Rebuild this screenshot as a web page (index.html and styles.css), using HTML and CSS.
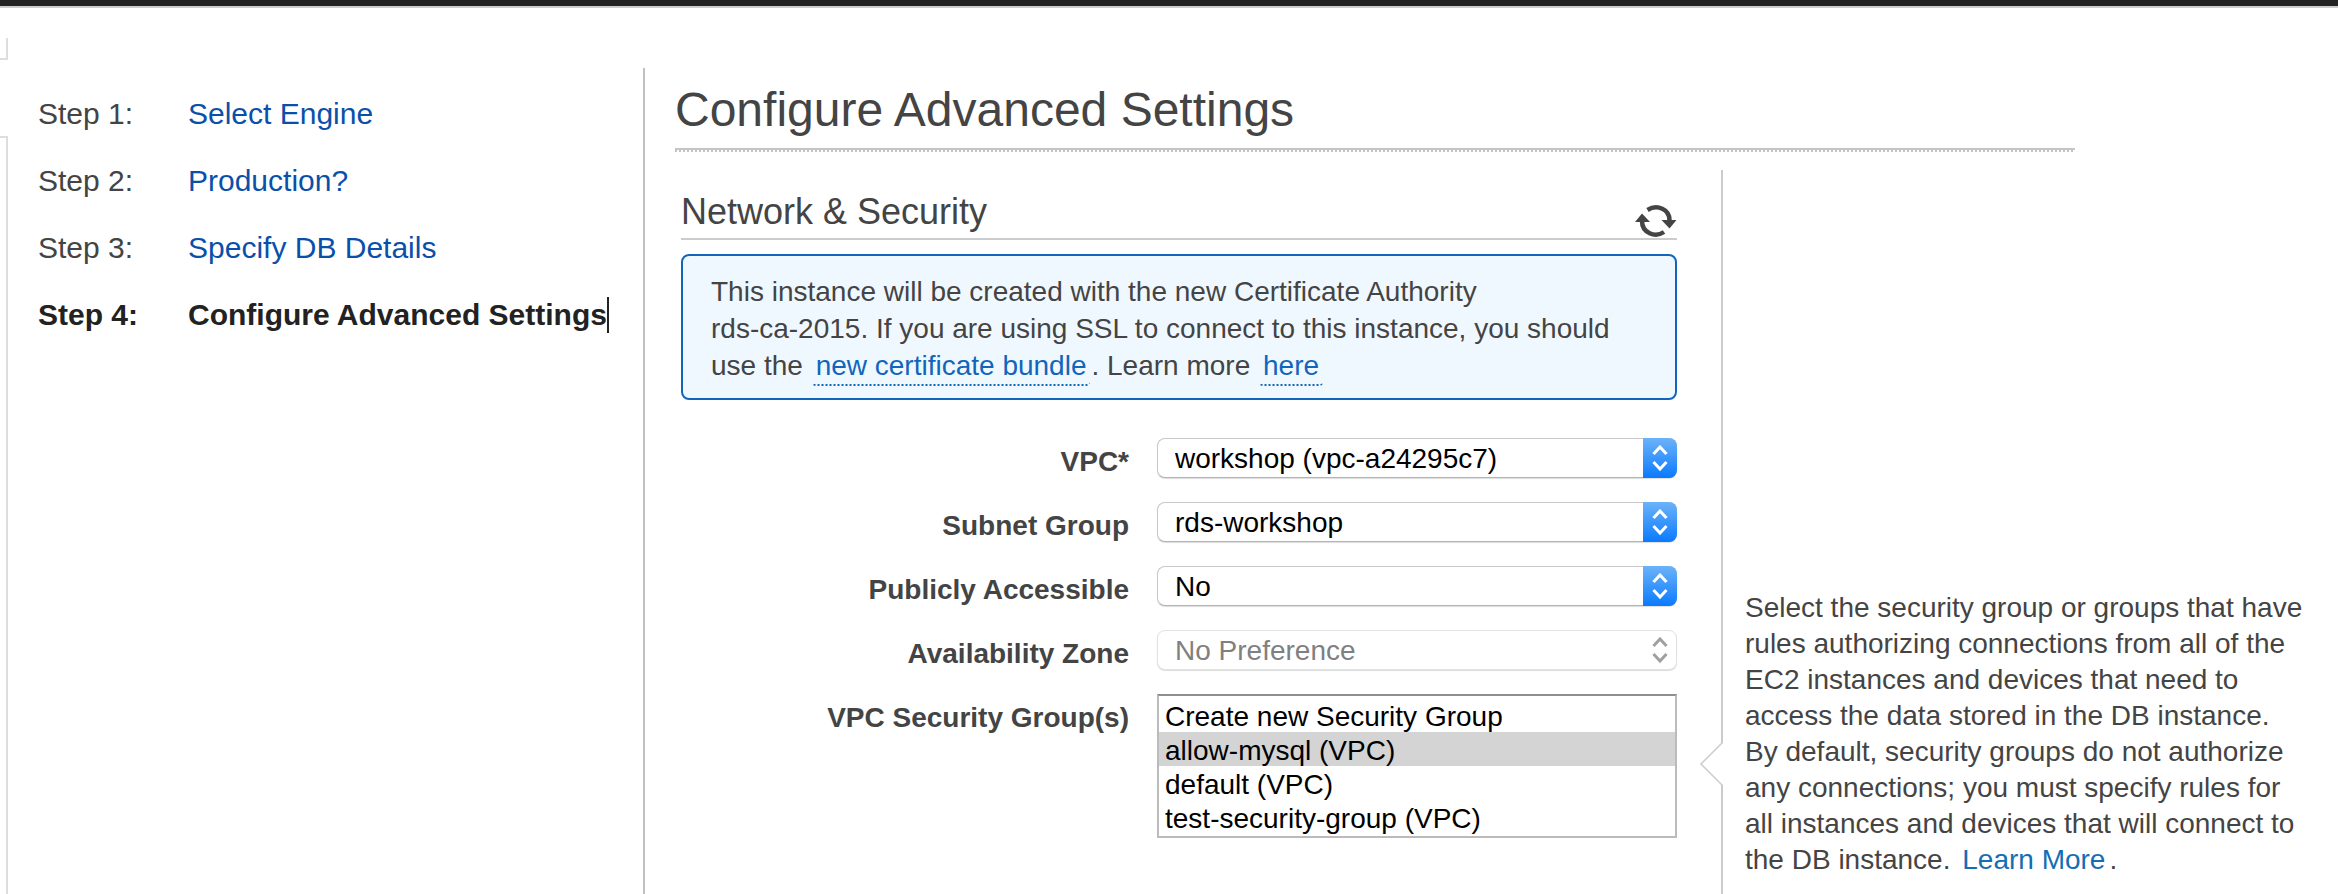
FILE: index.html
```html
<!DOCTYPE html>
<html lang="en">
<head>
<meta charset="utf-8">
<meta name="viewport" content="width=device-width, initial-scale=1">
<title>Configure Advanced Settings</title>
<link rel="stylesheet" href="styles.css">
</head>
<body>
<header class="topbar"></header>
<div class="page">
  <div class="rail" aria-hidden="true">
    <div class="rail-tab"></div>
    <div class="rail-panel"></div>
  </div>

  <nav class="steps" aria-label="Wizard steps">
    <ol class="step-list">
      <li class="step"><span>Step 1:</span><a href="#engine">Select Engine</a></li>
      <li class="step"><span>Step 2:</span><a href="#production">Production?</a></li>
      <li class="step"><span>Step 3:</span><a href="#details">Specify DB Details</a></li>
      <li class="step step-current" aria-current="step"><span>Step 4:</span><span class="step-name">Configure Advanced Settings</span></li>
    </ol>
  </nav>

  <main class="content">
    <h1 class="title">Configure Advanced Settings</h1>
    <div class="title-rule"></div>

    <div class="columns">
      <form class="form">
        <div class="section-head">
          <h2 class="section-title">Network &amp; Security</h2>
          <button class="refresh" type="button" aria-label="Refresh">
            <svg viewBox="0 0 42 34" width="42" height="34" aria-hidden="true">
              <g fill="none" stroke="#444" stroke-width="4.500">
                <path d="M12.500 6C22 0 35 5 34.500 17"/>
                <path d="M29 28C20 34 7 29 7 17"/>
              </g>
              <path fill="#444" d="M26.500 16h15L34.500 24.500zM0 18h15L7 9.500z"/>
            </svg>
          </button>
        </div>

        <p class="notice">This instance will be created with the new Certificate Authority<br>rds-ca-2015. If you are using SSL to connect to this instance, you should use the <a href="#bundle">new certificate bundle</a>. Learn more <a href="#here">here</a></p>

        <div class="fields">
          <label for="vpc">VPC*</label>
          <div class="picker">
            <select id="vpc"><option>workshop (vpc-a24295c7)</option></select>
            <span class="cap"><svg viewBox="0 0 16 26" width="16" height="26"><path d="M1.500 9L8 2l6.500 7M1.500 17L8 24l6.500-7"/></svg></span>
          </div>

          <label for="subnet">Subnet Group</label>
          <div class="picker">
            <select id="subnet"><option>rds-workshop</option></select>
            <span class="cap"><svg viewBox="0 0 16 26" width="16" height="26"><path d="M1.500 9L8 2l6.500 7M1.500 17L8 24l6.500-7"/></svg></span>
          </div>

          <label for="public">Publicly Accessible</label>
          <div class="picker">
            <select id="public"><option>No</option><option>Yes</option></select>
            <span class="cap"><svg viewBox="0 0 16 26" width="16" height="26"><path d="M1.500 9L8 2l6.500 7M1.500 17L8 24l6.500-7"/></svg></span>
          </div>

          <label for="zone">Availability Zone</label>
          <div class="picker picker-off">
            <select id="zone" disabled><option>No Preference</option></select>
            <span class="cap"><svg viewBox="0 0 16 26" width="16" height="26"><path d="M1.500 9L8 2l6.500 7M1.500 17L8 24l6.500-7"/></svg></span>
          </div>

          <label for="groups">VPC Security Group(s)</label>
          <select id="groups" class="listbox" multiple size="4">
            <option>Create new Security Group</option>
            <option selected>allow-mysql (VPC)</option>
            <option>default (VPC)</option>
            <option>test-security-group (VPC)</option>
          </select>
        </div>
      </form>

      <aside class="help">
        <div class="help-body">
          <svg class="notch" viewBox="0 0 24 44" width="24" height="44" aria-hidden="true">
            <path fill="#fff" d="M24 1h-2L1 22l21 21h2z"/>
            <path fill="none" stroke="#ccc" stroke-width="1.500" d="M23 0v1L2 22l21 21v1"/>
          </svg>
          <p>Select the security group or groups that have rules authorizing connections from all of the EC2 instances and devices that need to access the data stored in the DB instance. By default, security groups do not authorize any connections; you must specify rules for all instances and devices that will connect to the DB instance. <a href="#more">Learn More</a>.</p>
        </div>
      </aside>
    </div>
  </main>
</div>
</body>
</html>
```
FILE: styles.css
```css
* {
  box-sizing: border-box;
}

body {
  margin: 0;
  min-height: 100vh;
  display: flex;
  flex-direction: column;
  background: #fff;
  color: #444;
  font: 28px/36px "Liberation Sans", Arial, Helvetica, sans-serif;
}

h1,
h2,
p,
ol {
  margin: 0;
  padding: 0;
  font-weight: normal;
}

a {
  color: #0a50aa;
  text-decoration: none;
}

.topbar {
  height: 8px;
  background: #222;
  border-bottom: 2px solid #d0cccd;
}

.page {
  flex: 1;
  display: grid;
  grid-template-columns: 8px minmax(0, 637fr) minmax(0, 1693fr);
}

/* Edge of the collapsed left panel */
.rail {
  display: flex;
  flex-direction: column;
  gap: 76px;
  padding-top: 30px;
}

.rail-tab,
.rail-panel {
  border: 0 solid #ddd;
  border-right-width: 2px;
}

.rail-tab {
  height: 22px;
  border-bottom-width: 2px;
}

.rail-panel {
  flex: 1;
  border-top-width: 2px;
}

/* Wizard steps */
.steps {
  margin-top: 60px;
  padding: 28px 0 0 30px;
  border-right: 2px solid #c0c0c0;
}

.step-list {
  list-style: none;
  display: flex;
  flex-direction: column;
  gap: 31px;
}

.step {
  display: grid;
  grid-template-columns: 150px auto;
  justify-content: start;
  font-size: 30px;
}

.step-current {
  color: #222;
  font-weight: bold;
}

.step-name {
  border-right: 2px solid #222;
  white-space: nowrap;
}

/* Main column */
.content {
  display: flex;
  flex-direction: column;
  padding: 72px 0 0 30px;
}

.title {
  font-size: 48px;
  line-height: 60px;
}

.title-rule {
  height: 4px;
  margin: 8px 263px 0 0;
  background:
    linear-gradient(#c4c4c4, #c4c4c4) 0 0 / 100% 2px no-repeat,
    repeating-linear-gradient(90deg, #c4c4c4 0 2px, #fff 2px 4px);
}

.columns {
  flex: 1;
  margin-top: 18px;
  display: grid;
  grid-template-columns: minmax(0, 1046fr) minmax(0, 617fr);
}

.form {
  padding: 22px 44px 40px 6px;
}

.section-head {
  display: flex;
  justify-content: space-between;
  align-items: flex-end;
  border-bottom: 2px solid #ccc;
}

.section-title {
  font-size: 36px;
  line-height: 40px;
  padding-bottom: 6px;
}

.refresh {
  display: flex;
  padding: 0;
  border: 0;
  background: none;
}

.notice {
  margin-top: 14px;
  padding: 17px 44px 12px 28px;
  border: 2px solid #1166bb;
  border-radius: 8px;
  background: #f0f8ff;
  line-height: 37px;
}

.notice a {
  display: inline-block;
  margin: 0 1px;
  padding: 0 4px 2px;
  border-bottom: 2px dotted #1166bb;
  border-radius: 4px;
  line-height: 32px;
  color: #1166bb;
}

/* Form fields */
.fields {
  margin-top: 38px;
  display: grid;
  grid-template-columns: minmax(0, 448fr) minmax(0, 520fr);
  gap: 24px 28px;
}

.fields label {
  padding-top: 8px;
  line-height: 32px;
  font-weight: bold;
  text-align: right;
}

.picker {
  position: relative;
  height: 40px;
}

.picker select {
  appearance: none;
  width: 100%;
  height: 40px;
  padding: 2px 40px 0 17px;
  border: 1px solid #c8c8c8;
  border-bottom-color: #b4b4b4;
  border-radius: 8px;
  background: #fff;
  box-shadow: 0 1px 1px #ddd;
  color: #000;
  font: inherit;
}

.cap {
  position: absolute;
  top: 0;
  right: 0;
  width: 34px;
  height: 40px;
  display: grid;
  place-items: center;
  border-radius: 0 8px 8px 0;
  background: linear-gradient(#6cb3fa, #0a7aff);
  pointer-events: none;
}

.cap path {
  fill: none;
  stroke: #fff;
  stroke-width: 3;
}

.picker-off select {
  border-color: #e2e2e2;
  color: #808080;
  opacity: 1;
}

.picker-off .cap {
  background: none;
}

.picker-off .cap path {
  stroke: #a0a0a0;
}

.listbox {
  width: 100%;
  height: 144px;
  padding: 2px 0;
  border: 2px solid #bbb;
  border-top-color: #8e8e8e;
  border-radius: 0;
  background: #fff;
  color: #000;
  font: inherit;
  overflow: hidden;
}

.listbox option {
  height: 34px;
  min-height: 34px;
  padding: 3px 6px 0;
  line-height: 31px;
}

.listbox option:checked {
  background: #d4d4d4;
  color: #000;
}

/* Field help */
.help {
  border-left: 2px solid #ccc;
  padding: 420px 32px 10px 22px;
}

.help-body {
  position: relative;
}

.help-body a {
  margin: 0 4px;
  color: #146eb4;
}

.notch {
  position: absolute;
  top: 152px;
  left: -46px;
}
```
